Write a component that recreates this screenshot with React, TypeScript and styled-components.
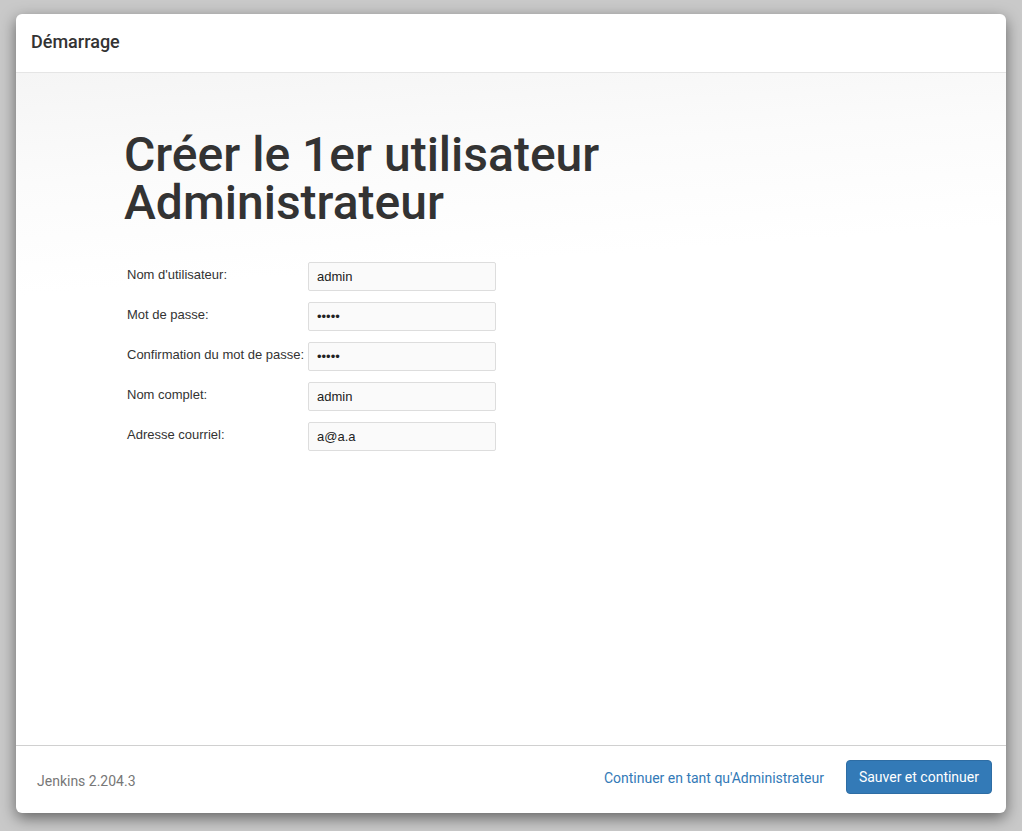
import React from 'react';
import styled, { createGlobalStyle } from 'styled-components';

const GlobalStyle = createGlobalStyle`
 html, body {
  margin: 0;
  padding: 0;
  background: #c9c9c9;
 }
 body {
  font-family: Roboto, "Liberation Sans", Arial, sans-serif;
  color: #333;
 }
`;

const Backdrop = styled.div`
 height: 831px;
 padding: 14px 16px 18px 16px;
 box-sizing: border-box;
`;

const Modal = styled.div`
 display: flex;
 flex-direction: column;
 height: 799px;
 background: #fff;
 border-radius: 6px;
 box-shadow: 0 5px 15px rgba(0, 0, 0, 0.5);
 overflow: hidden;
`;

const Header = styled.div`
 display: flex;
 align-items: center;
 height: 59px;
 padding: 0 15px 4px 15px;
 box-sizing: border-box;
 border-bottom: 1px solid #e5e5e5;
 flex-shrink: 0;
`;

const HeaderTitle = styled.h4`
 margin: 0;
 font-size: 18px;
 font-weight: 500;
 color: #333;
`;

const Body = styled.div`
 flex: 1;
 padding: 58px 108px 0 108px;
 background: linear-gradient(176deg, #f5f5f5 0%, #fbfbfb 15%, #fff 30%);
`;

const Title = styled.h1`
 margin: 0 0 35px 0;
 font-size: 48px;
 line-height: 48px;
 font-weight: 500;
 color: #333;
`;

const Form = styled.div`
 display: grid;
 grid-template-columns: 181px 188px;
 row-gap: 11px;
 padding-left: 3px;
 font-family: "Liberation Sans", Arial, sans-serif;
 font-size: 13px;
`;

const Label = styled.label`
 padding-top: 5px;
 color: #333;
 line-height: 15px;
 white-space: nowrap;
`;

const Field = styled.input`
 box-sizing: border-box;
 width: 188px;
 height: 29px;
 padding: 0 8px;
 border: 1px solid #ddd;
 border-radius: 2px;
 background: #fafafa;
 font-family: "Liberation Sans", Arial, sans-serif;
 font-size: 13px;
 color: #222;
 outline: none;
`;

const Footer = styled.div`
 display: flex;
 align-items: center;
 height: 68px;
 padding: 0 14px 0 21px;
 border-top: 1px solid #d0d0d0;
 flex-shrink: 0;
 box-sizing: border-box;
 font-size: 14px;
`;

const Version = styled.span`
 flex: 1;
 color: #777;
 padding-top: 2px;
`;

const LinkButton = styled.a`
 color: #337ab7;
 text-decoration: none;
 margin-right: 22px;
 margin-top: -4px;
 cursor: pointer;
`;

const PrimaryButton = styled.button`
 height: 34px;
 padding: 0 12px;
 background: #337ab7;
 border: 1px solid #2e6da4;
 border-radius: 4px;
 color: #fff;
 font-family: Roboto, "Liberation Sans", Arial, sans-serif;
 font-size: 14px;
 cursor: pointer;
 margin-top: -6px;
`;

const fields = [
 { label: "Nom d'utilisateur:", type: 'text', value: 'admin' },
 { label: 'Mot de passe:', type: 'password', value: 'admin' },
 { label: 'Confirmation du mot de passe:', type: 'password', value: 'admin' },
 { label: 'Nom complet:', type: 'text', value: 'admin' },
 { label: 'Adresse courriel:', type: 'text', value: 'a@a.a' },
];

const App: React.FC = () => {
 return (
  <>
   <GlobalStyle />
   <Backdrop>
    <Modal>
     <Header>
      <HeaderTitle>Démarrage</HeaderTitle>
     </Header>
     <Body>
      <Title>
       Créer le 1er utilisateur
       <br />
       Administrateur
      </Title>
      <Form>
       {fields.map(f => (
        <React.Fragment key={f.label}>
         <Label>{f.label}</Label>
         <Field type={f.type} defaultValue={f.value} />
        </React.Fragment>
       ))}
      </Form>
     </Body>
     <Footer>
      <Version>Jenkins 2.204.3</Version>
      <LinkButton>Continuer en tant qu'Administrateur</LinkButton>
      <PrimaryButton>Sauver et continuer</PrimaryButton>
     </Footer>
    </Modal>
   </Backdrop>
  </>
 );
};

export default App;
